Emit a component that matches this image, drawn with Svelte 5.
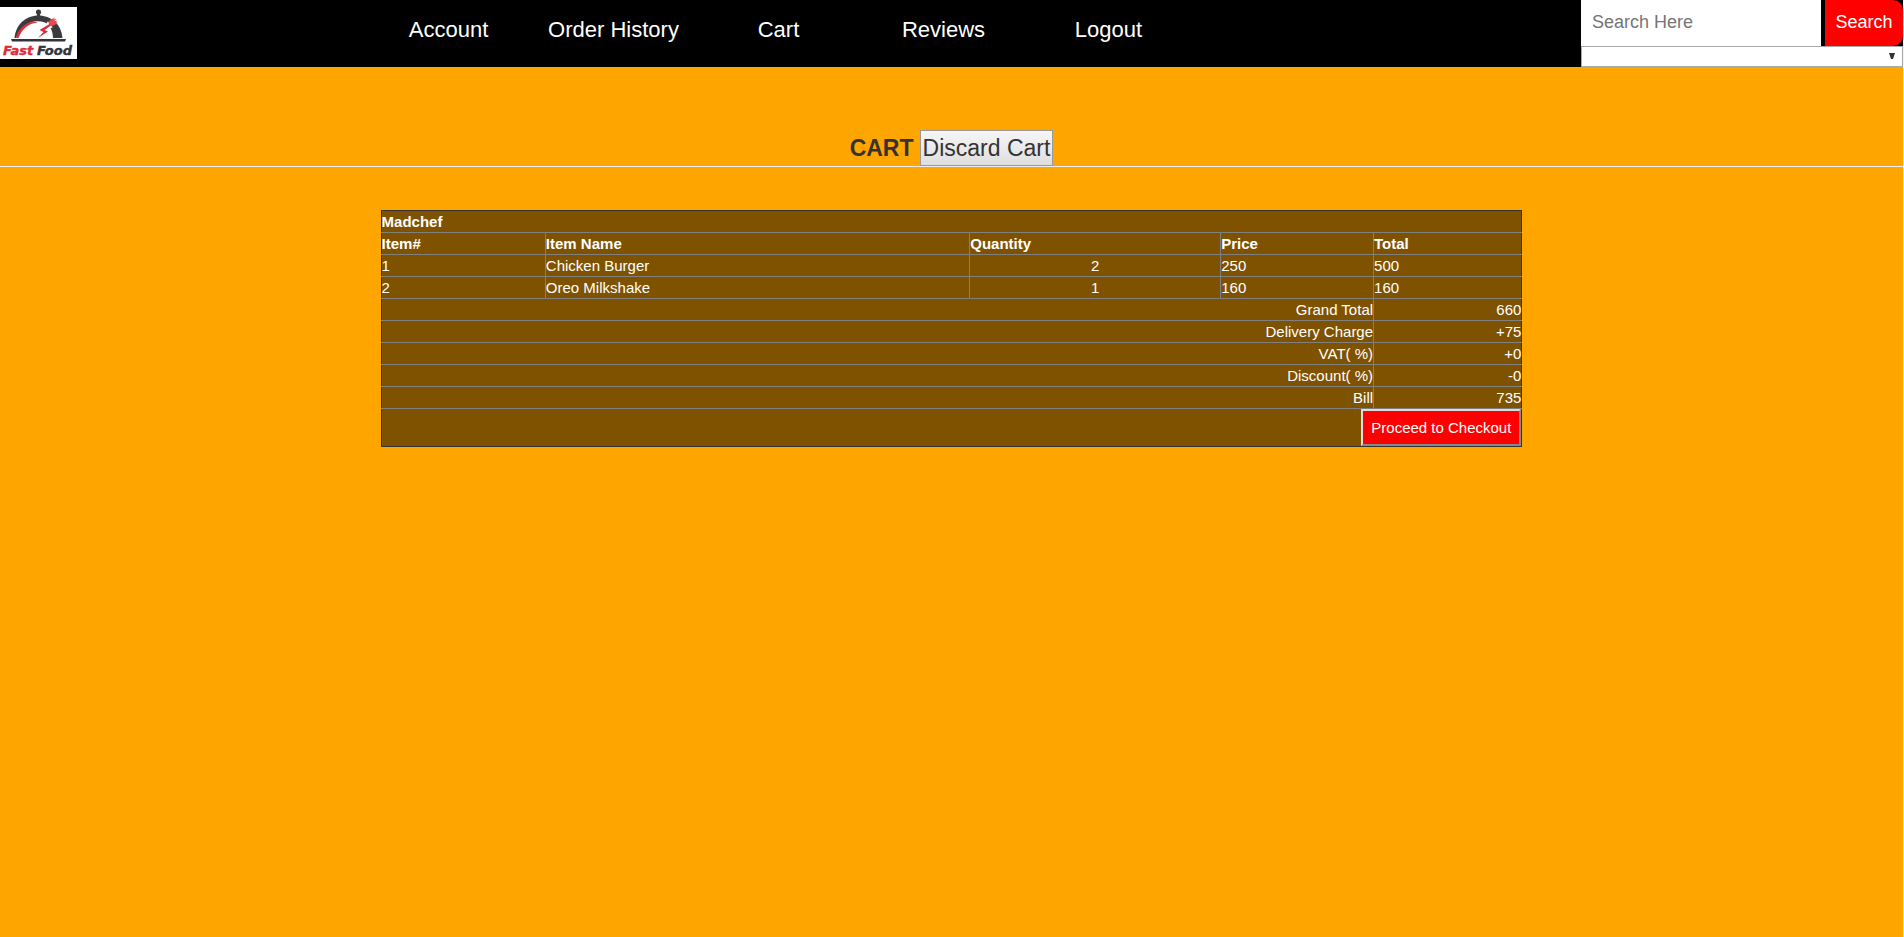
<script>
  const links = ['Account', 'Order History', 'Cart', 'Reviews', 'Logout'];
  const items = [
    { name: 'Chicken Burger', qty: 2, price: 250 },
    { name: 'Oreo Milkshake', qty: 1, price: 160 }
  ];
  const sums = [
    ['Grand Total', '660'],
    ['Delivery Charge', '+75'],
    ['VAT( %)', '+0'],
    ['Discount( %)', '-0'],
    ['Bill', '735']
  ];
</script>

<header>
  <a class="logo" href="#home" aria-label="Fast Food">
    <svg viewBox="0 0 77 52" width="77" height="52">
      <rect width="77" height="52" fill="#fff" />
      <circle cx="38.5" cy="5" r="2.6" fill="#3a3a3f" />
      <path d="M37 6h3v4h-3z" fill="#3a3a3f" />
      <path d="M14.500 31C16 17 26 8.500 38.500 8.500S61.500 17 62.500 31H53C53 24 50 18 45 15.500C33 11 20 18 16 31Z" fill="#3a3a3f" />
      <path d="M16 31C20 18 29 13.500 38 15.500C28 16.500 22 22 18.500 31Z" fill="#e02a35" />
      <path d="M48 16L44 22L51 20Z" fill="#fff" stroke="#fff" stroke-width="2" />
      <path d="M48.500 16L50 13L55 10.500L53.500 12.500L56.500 11.500L54.500 14L57.500 13.500L55.500 15.500L58 15.500L54 18.500L50.500 19Z" fill="#e8474b" />
      <path d="M49.500 17L39.500 23L43.500 25L38 31L48 24.500L44.500 23L51 18.500Z" fill="#e02a35" />
      <path d="M11 32H66L65 34.500H12Z" fill="#333338" />
      <text x="3" y="48" class="fast">Fast</text>
      <text x="37" y="48" class="food">Food</text>
    </svg>
  </a>
  <nav>
    {#each links as link}
      <a href="#{link.toLowerCase().replace(' ', '-')}">{link}</a>
    {/each}
  </nav>
  <form class="search">
    <div class="row">
      <input type="text" placeholder="Search Here" aria-label="Search Here" />
      <button type="button">Search</button>
    </div>
    <div class="pick">
      <select aria-label="Category"><option></option></select>
      <svg viewBox="0 0 6 6" width="6" height="6"><path d="M0 0H6L4 6H2Z" fill="#333" /></svg>
    </div>
  </form>
</header>

<main>
  <div class="title">
    <h1>CART</h1>
    <button type="button">Discard Cart</button>
  </div>

  <table>
    <colgroup>
      <col style="width: 14.4%" /><col style="width: 37.2%" /><col style="width: 22%" /><col style="width: 13.4%" /><col />
    </colgroup>
    <thead>
      <tr><th colspan="5">Madchef</th></tr>
      <tr><th>Item#</th><th>Item Name</th><th>Quantity</th><th>Price</th><th>Total</th></tr>
    </thead>
    <tbody>
      {#each items as item, i}
        <tr>
          <td>{i + 1}</td>
          <td>{item.name}</td>
          <td class="mid">{item.qty}</td>
          <td>{item.price}</td>
          <td>{item.qty * item.price}</td>
        </tr>
      {/each}
    </tbody>
    <tfoot>
      {#each sums as [label, value]}
        <tr><td class="end" colspan="4">{label}</td><td class="end">{value}</td></tr>
      {/each}
      <tr><td class="end" colspan="5"><button class="checkout" type="button">Proceed to Checkout</button></td></tr>
    </tfoot>
  </table>
</main>

<style>
  :global(body) {
    box-sizing: border-box;
    min-height: 100vh;
    border-right: 1px solid #f5f5f5;
    background: #ffa500;
    font-family: "Liberation Sans", Arial, sans-serif;
    color: #333;
  }
  header {
    display: grid;
    grid-template-columns: 366px 1fr 322px;
    min-height: 67px;
    background: #000;
  }
  .logo {
    padding-top: 7px;
    line-height: 0;
  }
  .fast, .food {
    font-family: "DejaVu Sans", sans-serif;
    font-size: 13px;
    font-style: italic;
    font-weight: 700;
    fill: #e02a35;
    stroke: #e02a35;
    stroke-width: 0.4;
  }
  .food {
    fill: #333338;
    stroke: #333338;
  }
  nav {
    display: grid;
    grid-template-columns: repeat(5, 165px);
    align-content: start;
    padding-top: 14px;
  }
  nav a {
    color: #fff;
    font-size: 22px;
    line-height: 31px;
    text-align: center;
    text-decoration: none;
  }
  .search { margin: 0; }
  .row {
    display: flex;
    gap: 4px;
    height: 46px;
  }
  .row input {
    flex: 1;
    min-width: 0;
    box-sizing: border-box;
    border: 0;
    padding: 0 11px 2px;
    background: #fff;
    font: 18px "Liberation Sans", Arial, sans-serif;
  }
  .row input::placeholder { color: #757575; }
  .row button {
    width: 78px;
    border: 0;
    border-radius: 0 10px 10px 0;
    padding: 0 0 2px;
    background: #f00;
    color: #fff;
    font: 18px "Liberation Sans", Arial, sans-serif;
  }
  .pick {
    display: grid;
    align-items: center;
  }
  .pick select, .pick svg { grid-area: 1 / 1; }
  .pick select {
    appearance: none;
    width: 100%;
    height: 21px;
    border: 1px solid #a9a9a9;
    border-radius: 0;
    background: #fff;
  }
  .pick svg {
    justify-self: end;
    margin: 0 8px 2px 0;
    pointer-events: none;
  }
  .title {
    display: flex;
    justify-content: center;
    gap: 6px;
    margin-top: 63px;
    border-bottom: 1px solid #eee;
  }
  h1 {
    margin: 0;
    font-size: 23px;
    line-height: 36px;
  }
  .title button {
    box-sizing: border-box;
    height: 36px;
    border: 1px solid #999;
    padding: 0 2px;
    background: linear-gradient(#f6f6f6, #dedede);
    color: #333;
    font: 23px "Liberation Sans", Arial, sans-serif;
  }
  table {
    width: 60%;
    margin: 43px auto 0;
    border-collapse: collapse;
    table-layout: fixed;
    border: 1px solid #333;
    background: rgba(0, 0, 0, 0.5);
    color: #fff;
    font-size: 15px;
    line-height: 21px;
  }
  th, td {
    border: 1px solid #808080;
    padding: 0;
    text-align: left;
  }
  tr > :first-child { border-left-color: #333; }
  tr > :last-child { border-right-color: #333; }
  thead tr:first-child th { border-top-color: #333; }
  tfoot tr:last-child td { border-bottom-color: #333; }
  .mid { text-align: center; }
  .end { text-align: right; }
  .checkout {
    display: block;
    margin-left: auto;
    height: 37px;
    border: 2px solid;
    border-color: #ddd #888 #888 #ddd;
    padding: 0 8px;
    background: #f00;
    color: #fff;
    font: 15px "Liberation Sans", Arial, sans-serif;
  }
</style>
